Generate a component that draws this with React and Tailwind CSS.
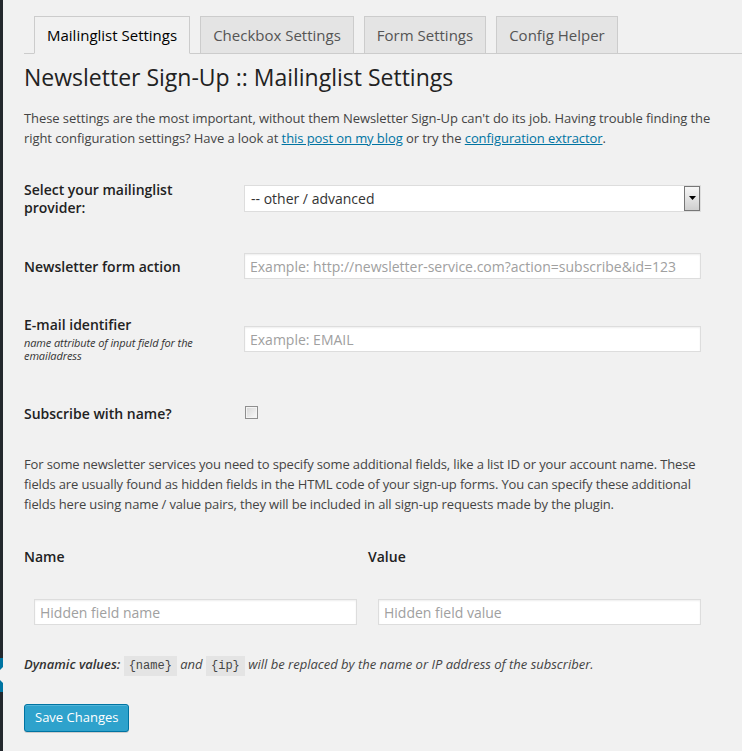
export default function App() {
  const tabs = ["Mailinglist Settings", "Checkbox Settings", "Form Settings", "Config Helper"];

  return (
    <div className="flex min-h-[751px] bg-[#f1f1f1] font-['Open_Sans',sans-serif] text-[#444]">
      {/* admin menu edge */}
      <div className="flex w-[3px] shrink-0 flex-col bg-[#23282d]">
        <div className="h-[658px]" />
        <svg width="3" height="34" viewBox="0 0 3 34" className="block">
          <rect width="3" height="34" fill="#0074a2" />
          <polygon points="3,9 -5,17 3,25" fill="#f1f1f1" />
        </svg>
      </div>

      <div className="flex-1 pl-[21px]">
        {/* Tabs */}
        <div className="flex gap-[10px] border-b border-[#ccc] pl-[10px] pt-[16px]">
          {tabs.map((tab, i) => (
            <div
              key={tab}
              className={
                i === 0
                  ? "-mb-px flex h-[38px] items-center border border-b-[#f1f1f1] border-[#ccc] bg-[#f1f1f1] px-[12px] text-[15px] text-[#000]"
                  : "flex h-[37px] items-center border border-b-0 border-[#ccc] bg-[#e4e4e4] px-[12px] text-[15px] text-[#555]"
              }
            >
              {tab}
            </div>
          ))}
        </div>

        {/* Title */}
        <h2 className="mt-[9px] text-[23px] leading-[29px] text-[#222]">
          Newsletter Sign-Up :: Mailinglist Settings
        </h2>

        <p className="mt-[16px] text-[13px] leading-[20px] tracking-[-0.08px]">
          These settings are the most important, without them Newsletter Sign-Up can't do its job. Having trouble finding the
          <br />
          right configuration settings? Have a look at{" "}
          <a className="text-[#0074a2] underline">this post on my blog</a> or try the{" "}
          <a className="text-[#0074a2] underline">configuration extractor</a>.
        </p>

        {/* Provider */}
        <div className="mt-[33px] flex">
          <div className="w-[220px] shrink-0 pr-[20px] text-[14px] font-semibold leading-[18px] text-[#222]">
            Select your mailinglist provider:
          </div>
          <div className="mt-[4px] flex h-[27px] w-[457px] items-center border border-[#ddd] bg-white pl-[6px] text-[14px] text-[#333]">
            <span className="flex-1">-- other / advanced</span>
            <div className="flex h-[25px] w-[16px] items-start justify-center border border-[#777] bg-gradient-to-b from-[#f7f7f7] to-[#cfcfcf] pt-[9px]">
              <svg width="7" height="4" viewBox="0 0 7 4">
                <polygon points="0,0 7,0 3.5,4" fill="#000" />
              </svg>
            </div>
          </div>
        </div>

        {/* Form action */}
        <div className="mt-[36px] flex h-[26px] items-center">
          <div className="w-[220px] shrink-0 text-[14px] font-semibold text-[#222]">Newsletter form action</div>
          <input
            type="text"
            placeholder="Example: http://newsletter-service.com?action=subscribe&id=123"
            className="h-[26px] w-[457px] border border-[#ddd] bg-white px-[5px] text-[14px] shadow-[inset_0_1px_2px_rgba(0,0,0,0.07)] outline-none placeholder:text-[#a0a0a0]"
          />
        </div>

        {/* E-mail identifier */}
        <div className="mt-[37px] flex">
          <div className="w-[220px] shrink-0 pr-[20px]">
            <div className="text-[14px] font-semibold leading-[18px] text-[#222]">E-mail identifier</div>
            <div className="mt-[2px] text-[11px] italic leading-[13px] tracking-[-0.1px] text-[#333]">
              name attribute of input field for the emailadress
            </div>
          </div>
          <input
            type="text"
            placeholder="Example: EMAIL"
            className="mt-[10px] h-[26px] w-[457px] border border-[#ddd] bg-white px-[5px] text-[14px] shadow-[inset_0_1px_2px_rgba(0,0,0,0.07)] outline-none placeholder:text-[#a0a0a0]"
          />
        </div>

        {/* Subscribe with name */}
        <div className="mt-[42px] flex h-[18px] items-center">
          <div className="w-[220px] shrink-0 text-[14px] font-semibold text-[#222]">Subscribe with name?</div>
          <div className="ml-[1px] h-[13px] w-[13px] -translate-y-px border border-[#8f8f8f] bg-gradient-to-br from-[#d6d6d6] to-[#fafafa] shadow-[inset_0_0_0_1px_#f4f4f4]" />
        </div>

        <p className="mt-[32px] text-[13px] leading-[20px] tracking-[-0.14px]">
          For some newsletter services you need to specify some additional fields, like a list ID or your account name. These
          <br />
          fields are usually found as hidden fields in the HTML code of your sign-up forms. You can specify these additional
          <br />
          fields here using name / value pairs, they will be included in all sign-up requests made by the plugin.
        </p>

        {/* Name / value */}
        <div className="mt-[34px] flex text-[14px] font-semibold leading-[18px] text-[#222]">
          <div className="w-[344px]">Name</div>
          <div className="w-[344px]">Value</div>
        </div>
        <div className="mt-[33px] flex">
          <div className="w-[344px] px-[10px]">
            <input
              type="text"
              placeholder="Hidden field name"
              className="h-[26px] w-[323px] border border-[#ddd] bg-white px-[5px] text-[14px] shadow-[inset_0_1px_2px_rgba(0,0,0,0.07)] outline-none placeholder:text-[#a0a0a0]"
            />
          </div>
          <div className="w-[344px] px-[10px]">
            <input
              type="text"
              placeholder="Hidden field value"
              className="h-[26px] w-[323px] border border-[#ddd] bg-white px-[5px] text-[14px] shadow-[inset_0_1px_2px_rgba(0,0,0,0.07)] outline-none placeholder:text-[#a0a0a0]"
            />
          </div>
        </div>

        <p className="mt-[29px] text-[13px] italic leading-[20px]">
          <strong className="font-semibold text-[#333]">Dynamic values:</strong>{" "}
          <code className="bg-[#e4e4e4] px-[5px] py-[3px] font-['Liberation_Mono',monospace] text-[12px] not-italic">{"{name}"}</code>{" "}
          and{" "}
          <code className="bg-[#e4e4e4] px-[5px] py-[3px] font-['Liberation_Mono',monospace] text-[12px] not-italic">{"{ip}"}</code>{" "}
          will be replaced by the name or IP address of the subscriber.
        </p>

        <button className="mt-[28px] h-[28px] rounded-[3px] border border-[#0074a2] bg-[#2ea2cc] px-[10px] text-[13px] text-white shadow-[inset_0_1px_0_rgba(120,200,230,0.5),0_1px_0_rgba(0,0,0,0.15)]">
          Save Changes
        </button>
      </div>
    </div>
  );
}
